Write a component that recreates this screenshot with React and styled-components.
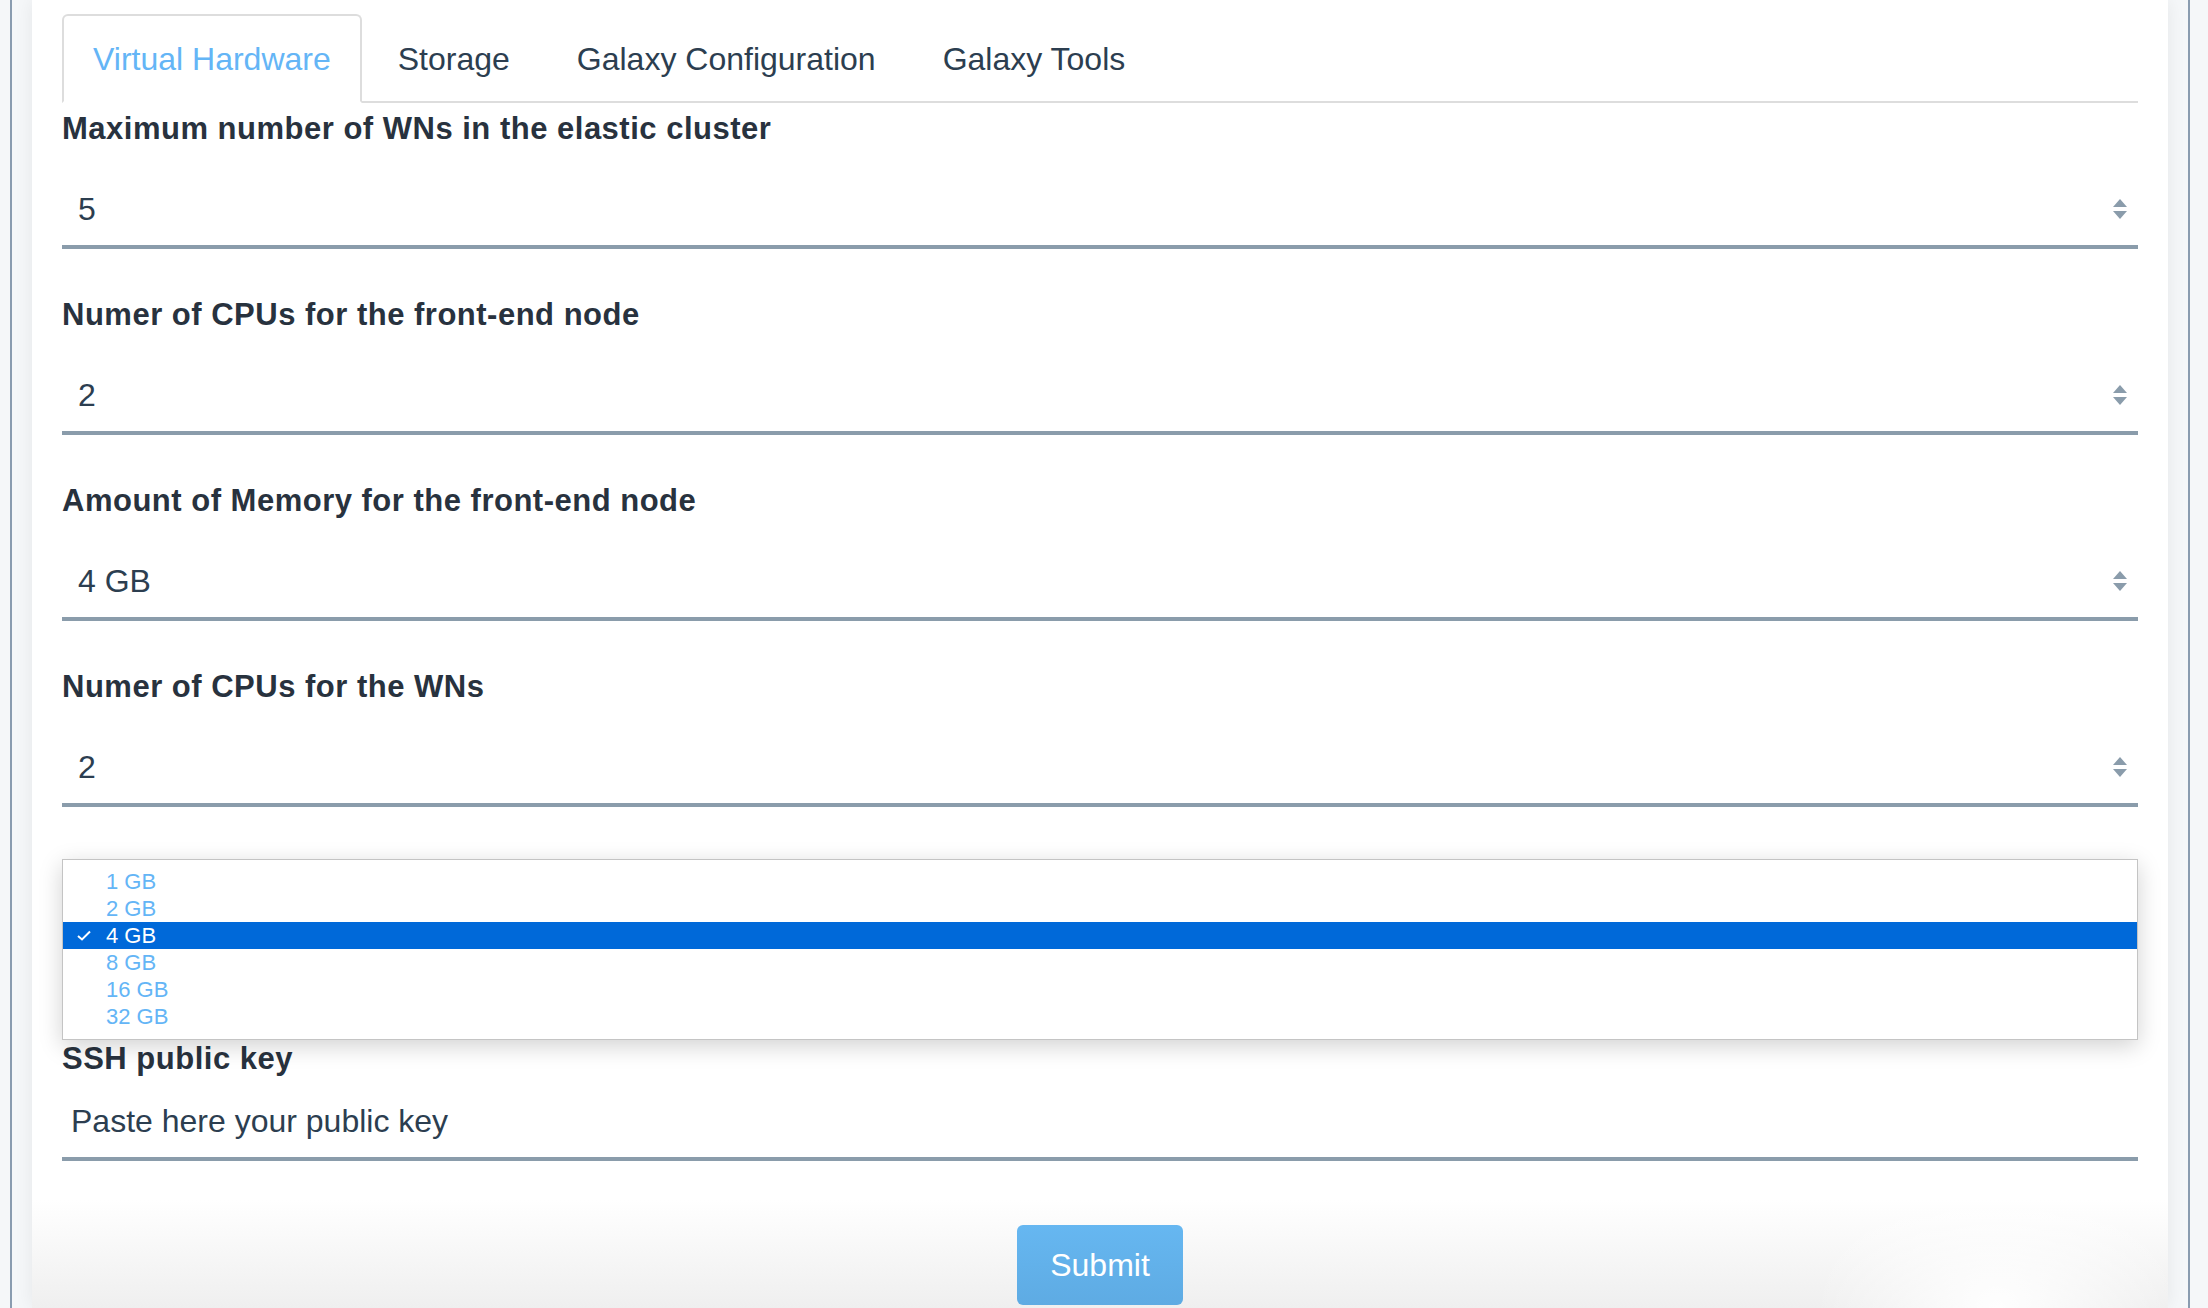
import React from 'react'
import styled, { createGlobalStyle } from 'styled-components'

const GlobalStyle = createGlobalStyle`
    html, body {
        margin: 0;
        padding: 0;
        background: #f5f7f9;
        font-family: "Liberation Sans", Arial, Helvetica, sans-serif;
        color: #2a3542;
    }
`

const Frame = styled.div`
    margin: 0 18px 0 10px;
    padding: 0 20px;
    min-height: 1308px;
    border-left: 2px solid #8a9cb0;
    border-right: 2px solid #8a9cb0;
    box-sizing: border-box;
    display: flex;
`

const Panel = styled.div`
    flex: 1;
    height: 1308px;
    overflow: hidden;
    box-sizing: border-box;
    padding: 14px 30px 0;
    background:
        radial-gradient(ellipse 260px 200px at 92% 100%, rgba(255,255,255,0.95), rgba(255,255,255,0) 70%),
        linear-gradient(to bottom, #fff 1200px, #efefef 1308px);
    box-shadow: 0 0 18px rgba(0, 0, 0, 0.07);
`

const TabBar = styled.div`
    display: flex;
    border-bottom: 2px solid #dddddd;
    margin-bottom: 8px;
`

const Tab = styled.div`
    padding: 25px 29px 24px;
    font-size: 32px;
    line-height: 36px;
    border: 2px solid ${p => (p.active ? '#dddddd' : 'transparent')};
    border-bottom-color: ${p => (p.active ? '#fff' : 'transparent')};
    border-radius: 6px 6px 0 0;
    margin-bottom: -2px;
    margin-right: 5px;
    color: ${p => (p.active ? '#64b5f6' : '#2c3e50')};
    background: ${p => (p.active ? '#fff' : 'transparent')};
    cursor: pointer;
`

const Field = styled.div`
    position: relative;
    margin-bottom: 48px;
`

const Label = styled.div`
    height: 36px;
    font-size: 31px;
    line-height: 36px;
    font-weight: bold;
    letter-spacing: 0.5px;
    color: #28323e;
`

const InputBox = styled.div`
    display: flex;
    align-items: center;
    justify-content: space-between;
    min-height: 36px;
    padding: ${p => (p.textarea ? '26px 16px 18px 9px' : '44px 11px 18px 16px')};
    border-bottom: 4px solid #8a9cab;
    font-size: 32px;
    line-height: 36px;
    color: #2c3e50;
`

const Spinner = styled.svg`
    width: 14px;
    height: 20px;
    flex-shrink: 0;
    margin-left: auto;
`

const Dropdown = styled.ul`
    position: absolute;
    top: 4px;
    left: 0;
    right: 0;
    margin: 0;
    padding: 8px 0 9px;
    list-style: none;
    background: #fff;
    border: 1px solid #c4c4c4;
    box-shadow: 0 6px 22px rgba(0, 0, 0, 0.18);
    z-index: 2;
`

const Option = styled.li`
    position: relative;
    height: 27px;
    line-height: 27px;
    padding-left: 43px;
    font-size: 22px;
    color: ${p => (p.selected ? '#fff' : '#64b5f6')};
    background: ${p => (p.selected ? '#0069d9' : 'transparent')};
`

const Check = styled.svg`
    position: absolute;
    left: 14px;
    top: 8px;
    width: 14px;
    height: 11px;
`

const SubmitRow = styled.div`
    display: flex;
    justify-content: center;
    padding-top: 64px;
`

const SubmitButton = styled.button`
    width: 166px;
    height: 80px;
    border: none;
    border-radius: 6px;
    background: linear-gradient(to bottom, #66b7f1, #5eabe3);
    color: #fff;
    font-family: "Liberation Sans", Arial, sans-serif;
    font-size: 32px;
    cursor: pointer;
`

const Arrows = () => (
    <Spinner viewBox="0 0 14 20">
        <path d="M7 0 L14 8 L0 8 Z" fill="#8a9cab" />
        <path d="M0 12 L14 12 L7 20 Z" fill="#8a9cab" />
    </Spinner>
)

const fields = [
    { label: 'Maximum number of WNs in the elastic cluster', value: '5' },
    { label: 'Numer of CPUs for the front-end node', value: '2' },
    { label: 'Amount of Memory for the front-end node', value: '4 GB' },
    { label: 'Numer of CPUs for the WNs', value: '2' },
]

const memory = ['1 GB', '2 GB', '4 GB', '8 GB', '16 GB', '32 GB']

export default function App() {
    return (
        <>
            <GlobalStyle />
            <Frame>
                <Panel>
                    <TabBar>
                        <Tab active>Virtual Hardware</Tab>
                        <Tab>Storage</Tab>
                        <Tab>Galaxy Configuration</Tab>
                        <Tab>Galaxy Tools</Tab>
                    </TabBar>

                    {fields.map(f => (
                        <Field key={f.label}>
                            <Label>{f.label}</Label>
                            <InputBox>
                                <span>{f.value}</span>
                                <Arrows />
                            </InputBox>
                        </Field>
                    ))}

                    {/* memory select for the WNs, shown open: its list covers the field */}
                    <Field>
                        <Label />
                        <InputBox>
                            <Arrows />
                        </InputBox>
                        <Dropdown>
                            {memory.map(m => (
                                <Option key={m} selected={m === '4 GB'}>
                                    {m === '4 GB' && (
                                        <Check viewBox="0 0 14 11">
                                            <path d="M1 6 L5 9.5 L13 1.5" fill="none" stroke="#fff" strokeWidth="2" />
                                        </Check>
                                    )}
                                    {m}
                                </Option>
                            ))}
                        </Dropdown>
                    </Field>

                    <Field>
                        <Label>SSH public key</Label>
                        <InputBox textarea>
                            <span>Paste here your public key</span>
                        </InputBox>
                        <SubmitRow>
                            <SubmitButton>Submit</SubmitButton>
                        </SubmitRow>
                    </Field>
                </Panel>
            </Frame>
        </>
    )
}
